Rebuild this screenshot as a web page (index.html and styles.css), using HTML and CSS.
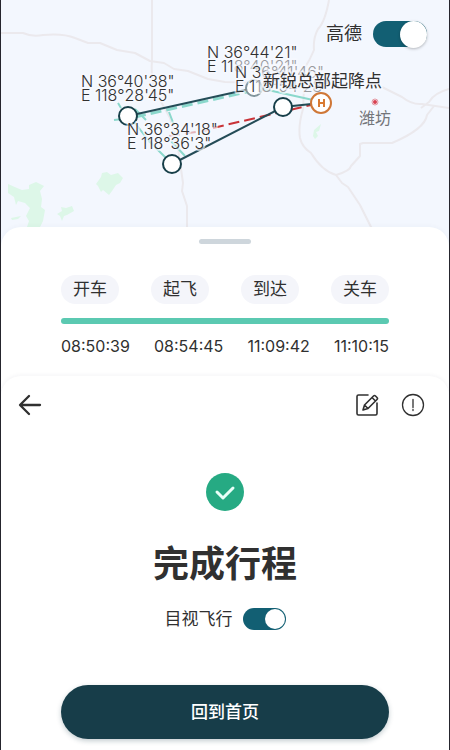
FILE: index.html
```html
<!DOCTYPE html>
<html lang="zh-CN">
<head>
<meta charset="utf-8">
<meta name="viewport" content="width=device-width, initial-scale=1">
<title>完成行程</title>
<link rel="stylesheet" href="styles.css">
</head>
<body>
<main class="app">
  <section class="map" aria-label="航线地图">
    <svg class="map-canvas" viewBox="0 0 448 250" preserveAspectRatio="xMidYMin slice">
      <g class="parks">
        <path d="M7 184l9 4 5 2 7-1v-4l7-3 8 4-4 5 2 8-1 8 4 3-2 11-3 6h-13l2-6-3-5 4-8-5-5-7-2-2 4-2-8-6-4z"/>
        <path d="M95 184l5-7 1-4 5-1 4 3 7-2 5 5-3 5-4 2-4 6-3 4-6-5-2 2-3-6z"/>
        <path d="M56 214l5-3-1-4 5 1 6-2 2 5-7 4-3 1-2 5-2-5zM10 218l10-2-3 3-6 1zM313 130l7-6-2 7-3 1 2 4-3 3-2-3z"/>
      </g>
      <g class="roads">
        <path d="M0 33h22q9 4 20 2 20-2 32 3l13 5h12l17 7 18 3 15 8 14 2 10 6 14 2 20 8 17 3 38 1 36 2"/>
        <path d="M151 0v60q-2 25 8 40l10 18 8 30 5 35-1 8 5 15v44"/>
        <path d="M328 0q-4 22-11 29-5 9-4 21-4 10-10 19v20l-1 20q-5 17-3 29 2 9 11 15 11 18 25 22l6 8 6 4 12 18 13 26"/>
        <path d="M335 175q14-4 15-9l9-10v-12l3-1h29q33-14 35-28l7-9"/>
        <path d="M381 87l20 10q10 8 20 7l27 4M448 89q-15 4-20 13l-8 6"/>
      </g>
      <g class="tracks">
        <path d="M117 103l3 5M113 120l9-1M134 109l11 11M134 123l14 18 19 19M168 112l5 13M170 141l14 15"/>
        <path class="dashed" d="M134 117L250 91"/>
        <path d="M258 88l54 12"/>
      </g>
      <path class="planned planned-faded" d="M168 136l40-6"/>
      <path class="planned" d="M212 128l98-23"/>
      <path class="route" d="M127 116L253 88M171 164L282 107L320 103"/>
      <g class="coords">
        <text x="80" y="87">N 36°40'38"</text>
        <text x="80" y="101">E 118°28'45"</text>
        <text x="206" y="58">N 36°44'21"</text>
        <text class="faded" x="206" y="72"><tspan class="clear">E 11</tspan>8°40'21"</text>
      </g>
      <circle class="node node-faded" cx="253" cy="88" r="8"/>
      <circle class="node" cx="127" cy="116" r="9"/>
      <g class="coords">
        <text class="faded" x="234" y="78"><tspan class="clear">N 3</tspan>6°41'46"</text>
        <text class="faded" x="234" y="92"><tspan class="clear">E 1</tspan>18°54'28"</text>
        <text x="126" y="135">N 36°34'18"</text>
        <text x="126" y="149">E 118°36'3"</text>
      </g>
      <circle class="node" cx="171" cy="164" r="9"/>
      <circle class="node" cx="282" cy="107" r="9"/>
      <circle class="base" cx="320" cy="103" r="10"/>
      <path class="base-mark" d="M318 99v8M323 99v8M318 103h5"/>
      <text class="place" x="262" y="87">新锐总部起降点</text>
      <circle class="city-ring" cx="374" cy="102" r="3"/>
      <circle class="city-dot" cx="374" cy="102" r="2"/>
      <text class="city" x="358" y="124">潍坊</text>
    </svg>
    <label class="map-toggle">高德<input class="switch switch-large" type="checkbox" role="switch" checked></label>
  </section>

  <section class="times">
    <div class="handle"></div>
    <ol class="stages">
      <li>开车</li><li>起飞</li><li>到达</li><li>关车</li>
    </ol>
    <div class="progress"></div>
    <div class="clock">
      <time>08:50:39</time><time>08:54:45</time><time>11:09:42</time><time>11:10:15</time>
    </div>
  </section>

  <section class="summary">
    <header class="toolbar">
      <button class="icon-button" aria-label="返回">
        <svg viewBox="0 0 24 24" stroke-width="2.300"><path d="M22 12H2.500M11 3L2 12l9 9"/></svg>
      </button>
      <button class="icon-button edit" aria-label="编辑">
        <svg viewBox="0 0 24 24" stroke-width="1.600"><path d="M13 2H3.500Q2 2 2 3.500v17Q2 22 3.500 22h17q1.500 0 1.500-1.500V10M8 17l1.500-5L18.500 3q1-1 2 0l1.500 1.500q1 1 0 2L13 15.500zM17 4.500l3.500 3.500M9.500 12l3.500 3.500"/></svg>
      </button>
      <button class="icon-button" aria-label="提示">
        <svg viewBox="0 0 24 24" stroke-width="1.300"><circle cx="12" cy="12" r="10.500"/><path d="M12 6.500v8M12 16.500v1"/></svg>
      </button>
    </header>
    <svg class="done" viewBox="0 0 38 38"><circle cx="19" cy="19" r="19"/><path d="M11 19l6 6 10-10"/></svg>
    <h1>完成行程</h1>
    <label class="visual">目视飞行<input class="switch" type="checkbox" role="switch" checked></label>
    <button class="home">回到首页</button>
  </section>
</main>
</body>
</html>
```
FILE: styles.css
```css
* { box-sizing: border-box; }

body {
  margin: 0;
  background: #fff;
  color: #303030;
  font: 17px/24px Roboto, "Noto Sans CJK SC", sans-serif;
}

button { border: 0; padding: 0; font: inherit; cursor: pointer; }

.app {
  display: flex;
  flex-direction: column;
  min-height: 100vh;
  border: solid #25252d;
  border-width: 0 1px;
  overflow: hidden;
}

.map { position: relative; height: 250px; background: #f3f7fe; }
.map-canvas { display: block; width: 100%; height: 250px; fill: none; }
.parks { fill: #ddf7e8; }
.roads { stroke: #ebe9ed; stroke-width: 2; stroke-linejoin: round; }
.tracks { stroke: #8bd8cc; stroke-width: 2; }
.dashed { stroke-dasharray: 11 5; stroke-width: 3; }
.planned { stroke: #c93338; stroke-width: 2; stroke-dasharray: 11 5; }
.planned-faded { opacity: .35; }
.route { stroke: #244c57; stroke-width: 2; }
.node { fill: #fff; stroke: #173f49; stroke-width: 2; }
.node-faded { stroke: #83969e; }
.base { fill: #fff; stroke: #cf7737; stroke-width: 2; }
.base-mark { stroke: #d97a32; stroke-width: 2; }
.coords, .place {
  fill: #303030;
  stroke: #f8faff;
  stroke-width: 4;
  stroke-opacity: .65;
  paint-order: stroke;
  stroke-linejoin: round;
}
.coords { font: 300 16px/14px Inter, sans-serif; }
.faded { fill: #999b9f; }
.clear { fill: #303030; }
.place { font-size: 17px; }
.city { fill: #737579; font-size: 16px; }
.city-ring { stroke: #e59aa4; }
.city-dot { fill: #d94050; }

.map-toggle {
  position: absolute;
  top: 21px;
  right: 22px;
  display: flex;
  align-items: center;
  gap: 11px;
  font-size: 18px;
}

.switch {
  appearance: none;
  display: flex;
  justify-content: flex-end;
  width: 43px;
  height: 22px;
  margin: 0;
  padding: 1px;
  border-radius: 22px;
  background: #125f73;
}
.switch::before {
  content: "";
  width: 20px;
  height: 20px;
  border-radius: 50%;
  background: #fff;
}
.switch-large { width: 54px; height: 26px; padding: 0; }
.switch-large::before { width: 27px; height: 27px; box-shadow: 0 1px 3px #0004; }

.times {
  position: relative;
  margin-top: -23px;
  padding: 12px 60px 32px;
  border-radius: 20px 20px 0 0;
  background: #fff;
  box-shadow: 0 -1px 5px #20305008;
}
.handle { width: 52px; height: 5px; margin: 0 auto 31px; border-radius: 3px; background: #ced6dc; }
.stages { display: flex; justify-content: space-between; margin: 0 0 14px; padding: 0; list-style: none; }
.stages li { padding: 2px 12px 3px; border-radius: 15px; background: #f4f5fa; }
.progress { height: 6px; margin-bottom: 10px; border-radius: 3px; background: #5bc9b1; }
.clock { display: flex; justify-content: space-between; font-family: Inter, sans-serif; font-size: 16px; }

.summary {
  position: relative;
  display: flex;
  flex: 1;
  flex-direction: column;
  align-items: center;
  margin-top: -14px;
  padding: 17px 24px 11px;
  border-radius: 20px 20px 0 0;
  background: #fff;
  box-shadow: 0 -1px 4px #2030500d;
}
.toolbar { display: flex; align-self: stretch; gap: 22px; margin-left: -7px; }
.icon-button { width: 24px; height: 24px; background: none; }
.icon-button svg { display: block; fill: none; stroke: #303030; stroke-linecap: round; stroke-linejoin: round; }
.edit { margin-left: auto; }
.done { width: 38px; height: 38px; margin-top: 56px; fill: #26aa83; }
.done path { fill: none; stroke: #e8fff8; stroke-width: 3; stroke-linecap: round; stroke-linejoin: round; }
h1 { margin: 28px 0 16px; font-size: 36px; line-height: 52px; font-weight: 700; }
.visual { display: flex; align-items: center; gap: 10px; }
.home {
  align-self: stretch;
  height: 54px;
  margin: auto 36px 0;
  border-radius: 27px;
  background: #173d49;
  color: #fff;
  font-weight: 500;
  box-shadow: 0 2px 5px #173d4940;
}
```
